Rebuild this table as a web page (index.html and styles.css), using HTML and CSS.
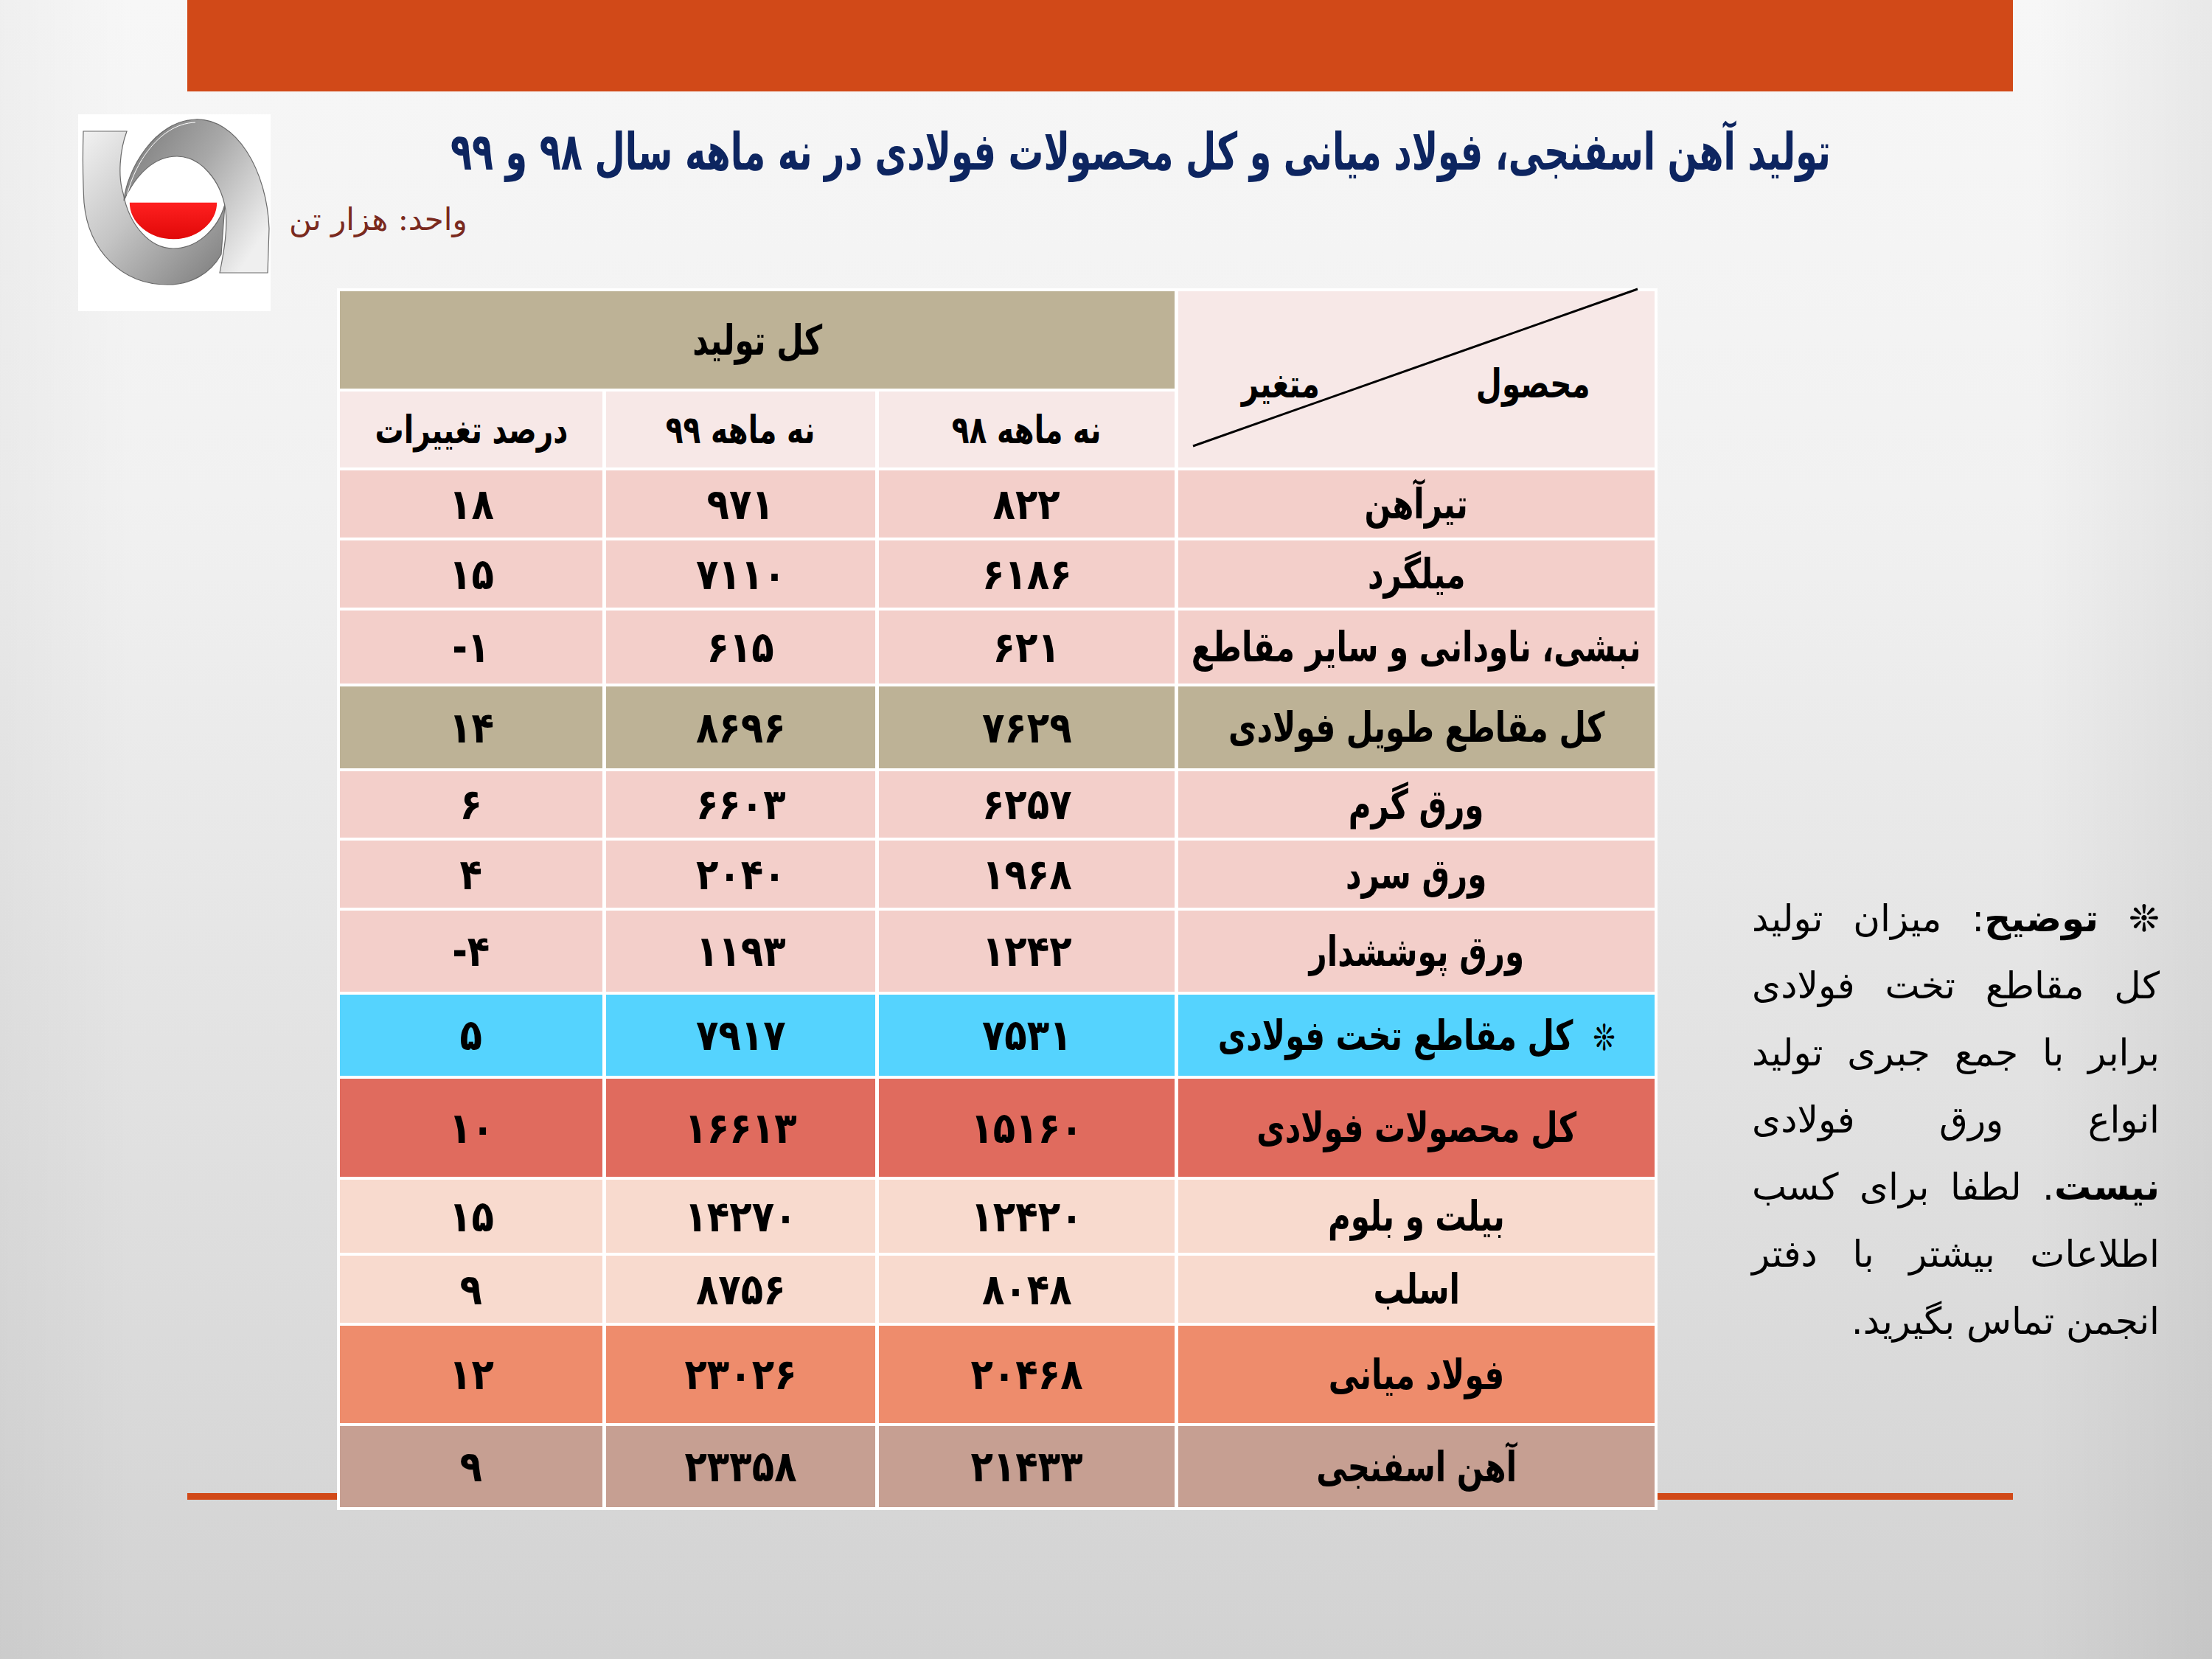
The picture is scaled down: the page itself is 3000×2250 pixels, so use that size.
FILE: index.html
```html
<!DOCTYPE html>
<html lang="fa">
<head>
<meta charset="utf-8">
<title>تولید آهن اسفنجی، فولاد میانی و کل محصولات فولادی</title>
<link rel="stylesheet" href="styles.css">
</head>
<body>
<div class="slide">
  <div class="topbar"></div>
  <div class="rule"></div>
  <div class="main">
    <div class="logo-col">
      <div class="logo">
        <svg viewBox="6 5 261 267" width="261" height="267">
          <defs>
            <linearGradient id="ga" x1="0" y1="0" x2="1" y2="1">
              <stop offset="0" stop-color="#f2f2f2"/>
              <stop offset="0.45" stop-color="#c4c4c4"/>
              <stop offset="1" stop-color="#7a7a7a"/>
            </linearGradient>
            <linearGradient id="gb" x1="0" y1="0" x2="1" y2="0.7">
              <stop offset="0" stop-color="#767676"/>
              <stop offset="0.5" stop-color="#a8a8a8"/>
              <stop offset="1" stop-color="#efefef"/>
            </linearGradient>
            <linearGradient id="gr" x1="0" y1="0" x2="0" y2="1">
              <stop offset="0" stop-color="#ff2020"/>
              <stop offset="1" stop-color="#e00808"/>
            </linearGradient>
          </defs>
          <path fill="url(#ga)" stroke="#6a6a6a" stroke-width="1.2" d="M13 28 L72 28 C62 55 60 90 67 112 C75 155 103 187 135 187 C168 187 196 160 205 127 L200 195 C185 222 158 236 127 236 C65 236 20 190 14 125 C12 90 12 60 13 28 Z"/>
          <path fill="url(#gb)" stroke="#6a6a6a" stroke-width="1.2" d="M68 122 C72 80 110 14 165 12 C220 10 262 80 265 160 L263 220 L198 220 C204 190 209 160 206 135 C200 95 172 62 140 62 C110 62 85 85 68 122 Z"/>
          <path fill="none" stroke="#ffffff" stroke-width="1" d="M72 118 C78 82 112 18 165 16"/>
          <path fill="url(#gr)" stroke="#ffffff" stroke-width="1.5" d="M75 124 L195 124 A60 51 0 0 1 75 124 Z"/>
        </svg>
      </div>
    </div>
    <div class="center">
      <div class="heading">
        <h1 class="title"><span class="title-text">تولید آهن اسفنجی، فولاد میانی و کل محصولات فولادی در نه ماهه سال ۹۸ و ۹۹</span></h1>
        <div class="unit">واحد: هزار تن</div>
      </div>
      <div class="content">
        <div class="table">
          <div class="cell corner">
            <svg class="diag" width="646" height="239"><line x1="20" y1="210" x2="623" y2="-3" stroke="#000" stroke-width="3"/></svg>
            <span class="t">محصول</span>
            <span class="t">متغیر</span>
          </div>
          <div class="cell total-head"><span class="t">کل تولید</span></div>
          <div class="cell sub"><span class="t">نه ماهه ۹۸</span></div>
          <div class="cell sub"><span class="t">نه ماهه ۹۹</span></div>
          <div class="cell sub"><span class="t">درصد تغییرات</span></div>

          <div class="cell pink"><span class="t">تیرآهن</span></div>
          <div class="cell num pink"><span class="n">۸۲۲</span></div>
          <div class="cell num pink"><span class="n">۹۷۱</span></div>
          <div class="cell num pink"><span class="n">۱۸</span></div>

          <div class="cell pink"><span class="t">میلگرد</span></div>
          <div class="cell num pink"><span class="n">۶۱۸۶</span></div>
          <div class="cell num pink"><span class="n">۷۱۱۰</span></div>
          <div class="cell num pink"><span class="n">۱۵</span></div>

          <div class="cell pink"><span class="t">نبشی، ناودانی و سایر مقاطع</span></div>
          <div class="cell num pink"><span class="n">۶۲۱</span></div>
          <div class="cell num pink"><span class="n">۶۱۵</span></div>
          <div class="cell num pink"><span class="n">۱-</span></div>

          <div class="cell tan"><span class="t">کل مقاطع طویل فولادی</span></div>
          <div class="cell num tan"><span class="n">۷۶۲۹</span></div>
          <div class="cell num tan"><span class="n">۸۶۹۶</span></div>
          <div class="cell num tan"><span class="n">۱۴</span></div>

          <div class="cell pink"><span class="t">ورق گرم</span></div>
          <div class="cell num pink"><span class="n">۶۲۵۷</span></div>
          <div class="cell num pink"><span class="n">۶۶۰۳</span></div>
          <div class="cell num pink"><span class="n">۶</span></div>

          <div class="cell pink"><span class="t">ورق سرد</span></div>
          <div class="cell num pink"><span class="n">۱۹۶۸</span></div>
          <div class="cell num pink"><span class="n">۲۰۴۰</span></div>
          <div class="cell num pink"><span class="n">۴</span></div>

          <div class="cell pink"><span class="t">ورق پوششدار</span></div>
          <div class="cell num pink"><span class="n">۱۲۴۲</span></div>
          <div class="cell num pink"><span class="n">۱۱۹۳</span></div>
          <div class="cell num pink"><span class="n">۴-</span></div>

          <div class="cell cyan"><span class="t"><span class="star">❊</span>کل مقاطع تخت فولادی</span></div>
          <div class="cell num cyan"><span class="n">۷۵۳۱</span></div>
          <div class="cell num cyan"><span class="n">۷۹۱۷</span></div>
          <div class="cell num cyan"><span class="n">۵</span></div>

          <div class="cell red"><span class="t">کل محصولات فولادی</span></div>
          <div class="cell num red"><span class="n">۱۵۱۶۰</span></div>
          <div class="cell num red"><span class="n">۱۶۶۱۳</span></div>
          <div class="cell num red"><span class="n">۱۰</span></div>

          <div class="cell peach"><span class="t">بیلت و بلوم</span></div>
          <div class="cell num peach"><span class="n">۱۲۴۲۰</span></div>
          <div class="cell num peach"><span class="n">۱۴۲۷۰</span></div>
          <div class="cell num peach"><span class="n">۱۵</span></div>

          <div class="cell peach"><span class="t">اسلب</span></div>
          <div class="cell num peach"><span class="n">۸۰۴۸</span></div>
          <div class="cell num peach"><span class="n">۸۷۵۶</span></div>
          <div class="cell num peach"><span class="n">۹</span></div>

          <div class="cell orange"><span class="t">فولاد میانی</span></div>
          <div class="cell num orange"><span class="n">۲۰۴۶۸</span></div>
          <div class="cell num orange"><span class="n">۲۳۰۲۶</span></div>
          <div class="cell num orange"><span class="n">۱۲</span></div>

          <div class="cell mauve"><span class="t">آهن اسفنجی</span></div>
          <div class="cell num mauve"><span class="n">۲۱۴۳۳</span></div>
          <div class="cell num mauve"><span class="n">۲۳۳۵۸</span></div>
          <div class="cell num mauve"><span class="n">۹</span></div>
        </div>
        <div class="note">
          <span class="ln">❊ <b>توضیح</b>: میزان تولید</span>
          <span class="ln">کل مقاطع تخت فولادی</span>
          <span class="ln">برابر با جمع جبری تولید</span>
          <span class="ln">انواع ورق فولادی</span>
          <span class="ln"><b>نیست</b>. لطفا برای کسب</span>
          <span class="ln">اطلاعات بیشتر با دفتر</span>
          <span class="ln last">انجمن تماس بگیرید.</span>
        </div>
      </div>
    </div>
  </div>
</div>
</body>
</html>
```

FILE: styles.css
```css
html, body {
  margin: 0;
  padding: 0;
}

body {
  font-family: "DejaVu Sans", sans-serif;
  color: #000;
}

.slide {
  position: relative;
  width: 3000px;
  height: 2250px;
  overflow: hidden;
  background:
    linear-gradient(90deg, rgba(0,0,0,0.03) 0%, rgba(0,0,0,0) 6%, rgba(0,0,0,0) 92%, rgba(0,0,0,0.06) 100%),
    linear-gradient(180deg, #f7f7f7 0%, #f1f1f1 30%, #e2e2e2 65%, #d2d2d2 100%);
}

.topbar {
  margin-left: 254px;
  width: 2476px;
  height: 124px;
  background: #d14918;
}

.rule {
  position: absolute;
  left: 254px;
  top: 2025px;
  width: 2476px;
  height: 9px;
  background: #d14918;
}

.main {
  display: flex;
}

.logo-col {
  padding-left: 106px;
  padding-top: 31px;
}

.logo {
  width: 261px;
  height: 267px;
  background: #ffffff;
}

.logo svg {
  display: block;
}

.center {
  width: 2563px;
}

.heading {
  box-sizing: border-box;
  height: 267px;
  padding-top: 32px;
  direction: rtl;
}

.title {
  margin: 0;
  padding-right: 447px;
  font-size: 70px;
  line-height: 100px;
  font-weight: bold;
  color: #0d2560;
  text-align: right;
  white-space: nowrap;
  height: 100px;
}

.title-text {
  display: inline-block;
  transform: scaleX(0.68);
  transform-origin: right center;
}

.unit {
  margin-top: 12px;
  text-align: left;
  padding-left: 25px;
  font-size: 42px;
  line-height: 60px;
  color: #7a2a1e;
  font-family: "DejaVu Serif", "DejaVu Sans", serif;
}

.content {
  display: flex;
  align-items: flex-start;
}

.table {
  position: relative;
  margin-left: 90px;
  direction: rtl;
  display: grid;
  grid-template-columns: 646px 401px 365px 356px;
  grid-template-rows: 132px 103px 91px 91px 99px 111px 90px 91px 110px 110px 133px 99px 91px 132px 110px;
  column-gap: 5px;
  row-gap: 4px;
  padding: 4px;
  background: #ffffff;
}

.cell {
  display: flex;
  align-items: center;
  justify-content: center;
  font-size: 56px;
  font-weight: bold;
  white-space: nowrap;
}

.cell .t {
  display: inline-block;
  transform: scaleX(0.75);
}

.num {
  font-size: 58px;
}

.cell .n {
  display: inline-block;
  transform: scaleX(0.86);
}

.corner {
  position: relative;
  grid-row: span 2;
  background: #f7e8e7;
  justify-content: space-between;
  font-size: 54px;
  padding: 12px 62px 0 68px;
}

.diag {
  position: absolute;
  left: 0;
  top: 0;
  overflow: visible;
}

.total-head {
  grid-column: span 3;
  background: #bdb296;
}

.sub {
  background: #f7e8e7;
  font-size: 52px;
}

.pink { background: #f3cfca; }
.tan { background: #bdb296; }
.cyan { background: #55d3fe; }
.red { background: #e06b5e; }
.peach { background: #f8dace; }
.orange { background: #ee8c6c; }
.mauve { background: #c69f92; }

.star {
  margin-left: 36px;
  font-size: 48px;
}

.note {
  margin-left: 128px;
  margin-top: 810px;
  width: 553px;
  direction: rtl;
  font-size: 50px;
  line-height: 91px;
  color: #000;
}

.ln {
  display: block;
  text-align: justify;
  text-align-last: justify;
  white-space: nowrap;
}

.ln.last {
  text-align-last: right;
}

.note b {
  font-weight: bold;
}
```
